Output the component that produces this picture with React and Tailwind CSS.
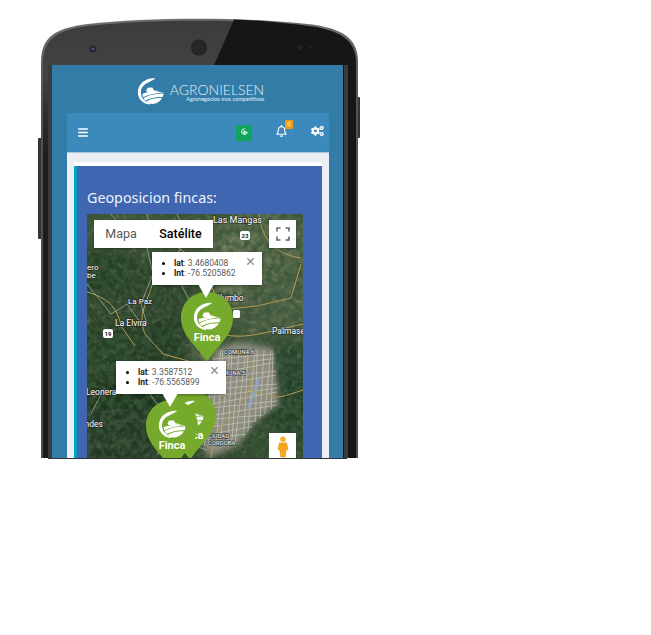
import React from 'react';
import { FaBars, FaRegBell, FaCogs } from 'react-icons/fa';

// map patches: x, y, rx, ry, colour (coords relative to the map box)
const PATCHES = [
  [40, 20, 60, 30, '#435539'], [120, 20, 30, 25, '#4b5d41'], [175, 30, 50, 40, '#5a6a4b'],
  [200, 90, 45, 35, '#506245'], [150, 60, 25, 35, '#6a7759'], [20, 60, 40, 30, '#283f25'],
  [70, 70, 30, 25, '#2c4327'], [20, 140, 40, 40, '#273f25'], [80, 130, 35, 30, '#233b22'],
  [60, 190, 70, 30, '#1d351f'], [30, 225, 60, 30, '#203822'], [200, 150, 35, 25, '#27432a'],
  [205, 195, 30, 30, '#233f26'], [118, 120, 12, 45, '#6b7259'], [165, 105, 18, 30, '#4d5e42'],
  [160, 225, 30, 25, '#33492f'],
];

const ROADS = [
  'M60 0 C62 20 84 28 100 40 L118 60 L136 96',
  'M132 118 C150 128 180 118 216 110',
  'M172 0 C176 30 190 40 214 44',
  'M214 50 L204 84 L170 92 L132 96',
  'M66 68 C60 90 50 100 58 120 L76 140 L112 150 L128 180',
  'M0 78 C20 84 30 92 34 112 L48 132',
  'M160 140 C168 160 166 180 144 200 C130 214 126 230 124 244',
  'M160 176 C190 180 176 190 216 176',
];

const BORDERS = [
  'M24 0 C40 20 46 30 60 34 L66 60 L54 90 L60 110',
  'M0 70 L24 100 L40 90 L56 112',
  'M90 0 L100 24 L84 50 L104 90 L120 100',
  'M60 150 L40 180 L16 176 L4 200',
  'M84 172 L60 176 L70 190 L100 200 L130 210',
  'M70 240 L96 228 L120 236',
];

const LABELS = [
  ['Las Mangas', 126, 9, 9],
  ['La Paz', 41, 90, 8],
  ['La Elvira', 28, 112, 8.5],
  ['Palmase', 185, 120, 8.5],
  ['Yumbo', 130, 87, 8.5],
  ['COMUNA 6', 137, 140, 6],
  ['COMUNA 5', 128, 161, 6],
  ['Leonera', -1, 181, 8.5],
  ['Los Andes', -24, 213, 8.5],
  ['CIUDAD', 121, 224, 6],
  ['CORDOBA', 121, 231, 6],
  ['ero', 0, 56, 8],
  ['be', 0, 64, 8],
];

function LogoMark({ className }) {
  return (
    <svg viewBox="0 0 28 28" className={className} fill="currentColor">
      <path d="M19 1 C11 0 2 5 1 14 C0 21 5 27 13 28 L14 26.6 C8 25.5 3.6 21 4 14.5 C4.4 8 11 3.4 19 1z" />
      <path d="M4.5 7.5 L7 5 L11 3 L15 1.8 L19.5 1 L15 3.4 L11 5.4 L7.5 7.4 L5.4 10z" />
      <path d="M9.5 13.5 L11 10.6 L16 10.4 L17.4 13.2 L24 14.6 L11 15.6z" />
      <path d="M5.5 17 C12 14.6 20 14.4 28 15.6 C20 15.8 12 17.6 6.2 20.4z" />
      <path d="M6.6 21.4 C13 17.6 20 16.6 27.6 16.6 C27.4 18 27 19.2 26.6 20.2 C20 19.8 14 21 8.6 24z" />
      <path d="M9.8 24.8 C15 22 20 21 25.8 21.4 C24 24.6 20.4 27 16 27.6 C13.6 27.2 11.4 26.2 9.8 24.8z" />
    </svg>
  );
}

function Pin({ className }) {
  return (
    <div className={`absolute w-[52px] h-[70px] ${className}`}>
      <svg viewBox="0 0 52 70" className="absolute inset-0 w-full h-full">
        <path d="M26 0 C41 0 52 11 52 26 C52 44 35 55 26 70 C17 55 0 44 0 26 C0 11 11 0 26 0z" fill="#76aa2c" />
      </svg>
      <div className="relative flex flex-col items-center pt-[10px]">
        <LogoMark className="w-[28px] h-[28px] text-white" />
        <span className="font-['Roboto',sans-serif] font-bold text-[11px] leading-[12px] mt-[2px] text-white">Finca</span>
      </div>
    </div>
  );
}

function InfoWindow({ className, lat, lng }) {
  return (
    <div className={`absolute w-[110px] h-[33px] bg-white shadow-[0_1px_3px_rgba(0,0,0,0.4)] ${className}`}>
      <ul className="font-['Roboto',sans-serif] text-[8.5px] leading-[10px] text-[#5a5a5a] pl-[22px] pt-[6px] list-disc marker:text-black">
        <li><b className="text-[#222]">lat</b>: {lat}</li>
        <li><b className="text-[#222]">lnt</b>: {lng}</li>
      </ul>
      <span className="absolute right-[7px] top-[3px] text-[16px] leading-[14px] text-[#8a8a8a] font-['Liberation_Sans',sans-serif]">×</span>
      <div className="absolute left-[46px] top-[32px] w-0 h-0 border-x-[8px] border-x-transparent border-t-[14px] border-t-white" />
    </div>
  );
}

function MapArt() {
  const streets = [];
  for (let i = 0; i < 14; i++) {
    // uneven spacing, a city grid is never straight
    const wob = ((i * 7) % 5) - 2;
    streets.push(<line key={'a' + i} x1={122 + i * 5 + wob} y1={136} x2={112 + i * 5.4 - wob} y2={232} />);
    streets.push(<line key={'b' + i} x1={114} y1={148 + i * 6 + wob} x2={190} y2={138 + i * 6 - wob} />);
  }
  return (
    <svg viewBox="0 0 216 244" className="absolute inset-0 w-full h-full">
      <defs>
        <filter id="soft" x="-30%" y="-30%" width="160%" height="160%">
          <feGaussianBlur stdDeviation="7" />
        </filter>
        <filter id="soft2" x="-30%" y="-30%" width="160%" height="160%">
          <feGaussianBlur stdDeviation="3" />
        </filter>
        <filter id="grain" x="0" y="0" width="100%" height="100%">
          <feTurbulence type="fractalNoise" baseFrequency="0.14" numOctaves="3" seed="7" />
          <feColorMatrix type="matrix" values="0 0 0 0 0.04  0 0 0 0 0.09  0 0 0 0 0.04  2.4 0 0 0 -0.85" />
        </filter>
        <filter id="grainLight" x="0" y="0" width="100%" height="100%">
          <feTurbulence type="fractalNoise" baseFrequency="0.2" numOctaves="2" seed="21" />
          <feColorMatrix type="matrix" values="0 0 0 0 0.55  0 0 0 0 0.62  0 0 0 0 0.45  2.2 0 0 0 -1.05" />
        </filter>
        <clipPath id="city">
          <path d="M128 136 L150 128 L186 134 L192 190 L170 206 L150 232 L120 244 L112 214z" />
        </clipPath>
      </defs>
      <rect width="216" height="244" fill="#31462c" />
      <g filter="url(#soft)">
        {PATCHES.map(([x, y, rx, ry, c], i) => (
          <ellipse key={i} cx={x} cy={y} rx={rx} ry={ry} fill={c} />
        ))}
      </g>
      <rect width="216" height="244" filter="url(#grainLight)" opacity="0.3" />
      <rect width="216" height="244" filter="url(#grain)" opacity="0.9" />
      <path d="M128 136 L150 128 L186 134 L192 190 L170 206 L150 232 L120 244 L112 214z" fill="#8e8d80" filter="url(#soft2)" />
      <g stroke="#dedbd0" strokeWidth="0.9" opacity="0.6" clipPath="url(#city)">{streets}</g>
      <path d="M172 164 L162 194" stroke="#8fa9c8" strokeWidth="3" opacity="0.8" />
      <g fill="none" stroke="#b39a55" strokeWidth="1">
        {ROADS.map((d, i) => <path key={i} d={d} />)}
      </g>
      <g fill="none" stroke="#c9d2c4" strokeWidth="0.7" opacity="0.8">
        {BORDERS.map((d, i) => <path key={i} d={d} />)}
      </g>
      <g fontFamily="Roboto, sans-serif" fill="#fff" stroke="#222" strokeWidth="1.6" style={{ paintOrder: 'stroke' }}>
        {LABELS.map(([t, x, y, s]) => (
          <text key={t} x={x} y={y} fontSize={s} strokeOpacity="0.7">{t}</text>
        ))}
      </g>
      <rect x="153" y="17" width="10" height="9" rx="2" fill="#fff" />
      <text x="158" y="24" fontSize="6" textAnchor="middle" fontFamily="Roboto, sans-serif" fontWeight="700" fill="#222">23</text>
      <rect x="16" y="115" width="10" height="9" rx="2" fill="#fff" />
      <text x="21" y="122" fontSize="6" textAnchor="middle" fontFamily="Roboto, sans-serif" fontWeight="700" fill="#222">19</text>
      <rect x="146" y="96" width="7" height="8" rx="1.5" fill="#fff" />
    </svg>
  );
}

function PhoneBody() {
  return (
    <svg viewBox="0 0 323 441" className="absolute left-[-3px] top-0 w-[323px] h-[441px]">
      <defs>
        <linearGradient id="rim" x1="0" y1="0" x2="0" y2="1">
          <stop offset="0" stopColor="#6e6e6e" />
          <stop offset="0.2" stopColor="#525252" />
          <stop offset="1" stopColor="#4d4d4d" />
        </linearGradient>
        <linearGradient id="sheen" x1="0" y1="0" x2="0" y2="1">
          <stop offset="0" stopColor="#3c3c3c" />
          <stop offset="0.12" stopColor="#434343" />
          <stop offset="0.3" stopColor="#1e1e1e" />
          <stop offset="1" stopColor="#181818" />
        </linearGradient>
        <pattern id="mesh" width="1.6" height="1.6" patternUnits="userSpaceOnUse">
          <circle cx="0.8" cy="0.8" r="0.45" fill="#4a4a4a" />
        </pattern>
      </defs>
      <rect x="0" y="120" width="4" height="101" rx="1" fill="#333" />
      <rect x="318" y="79" width="4" height="41" rx="1" fill="#333" />
      <path d="M3 440 V44 C3 20 16 10 50 6 C110 -1 210 -1 270 6 C304 10 320 20 320 44 V440z" fill="url(#rim)" />
      <path d="M5 440 V45 C5 22 18 12 50 8 C110 1 210 1 270 8 C302 12 318 22 318 45 V440z" fill="url(#sheen)" />
      <path d="M196 1.5 C230 3 255 6 270 8 C302 12 318 22 318 45 V440 H176 V47z" fill="#161616" />
      <rect x="10" y="47" width="4" height="393" fill="#3a3a3a" />
      <rect x="306" y="47" width="4" height="393" fill="#3a3a3a" />
      <circle cx="55" cy="31" r="3.4" fill="#24242c" />
      <circle cx="55" cy="31" r="1.4" fill="#55557a" />
      <circle cx="161" cy="29.5" r="8" fill="#1c1c1c" stroke="#333" strokeWidth="0.6" />
      <circle cx="161" cy="29.5" r="7" fill="url(#mesh)" />
      <circle cx="262" cy="29.5" r="2.6" fill="#222" />
      <circle cx="273" cy="29.5" r="1.6" fill="#222" />
    </svg>
  );
}

export default function App() {
  return (
    <div className="w-[651px] h-[635px] bg-white pt-[18px] pl-[41px] font-['Noto_Sans',sans-serif]">
      <div className="relative w-[317px] h-[441px]">
        <PhoneBody />
        {/* screen */}
        <div className="absolute left-[11px] top-[47px] w-[291px] h-[393px] bg-[#337ca8] overflow-hidden flex flex-col">
          <div className="h-[48px] shrink-0 flex justify-center pl-[6px] text-[#e6eff6]">
            <div className="flex items-start pt-[12px] gap-[6px]">
              <LogoMark className="w-[27px] h-[28px] text-white" />
              <div className="pt-[7px] flex flex-col items-end">
                <span className="font-['Lato',sans-serif] font-light text-[14px] leading-[12px]">AGRONIELSEN</span>
                <span className="font-['Lato',sans-serif] text-[5.6px] leading-[6px]">Agronegocios mas competitivos</span>
              </div>
            </div>
          </div>

          <div className="mx-[15px] w-[262px] flex-1 flex flex-col">
            <div className="h-[39px] shrink-0 bg-[#3b8abb] text-white relative flex items-center">
              <FaBars className="ml-[11px] w-[10px] h-[11px]" />
              <div className="ml-[148px] w-[16px] h-[16px] bg-[#0ea55d] flex justify-center pt-[3px]">
                <LogoMark className="w-[7px] h-[7px] text-white" />
              </div>
              <div className="relative ml-[24px]">
                <FaRegBell className="w-[11px] h-[12px] -mt-[3px]" />
                <span className="absolute left-[9px] top-[-8px] w-[8px] h-[9px] rounded-[1px] bg-[#f39c12] text-[6px] leading-[9px] text-center">0</span>
              </div>
              <FaCogs className="ml-[24px] w-[13px] h-[12px] -mt-[4px]" />
            </div>

            <div className="flex-1 bg-[#ebeff4] border-t border-[#a9c6dc] px-[7px] pt-[9px]">
              <div className="h-[400px] bg-white pt-[4px]">
                <div className="h-full bg-[#4066b2] border-l-[3px] border-[#00a5bd] pl-[10px] pt-[20px]">
                  <h3 className="text-[14.3px] font-normal leading-[24px] text-[#eef2fa] font-['Noto_Sans',sans-serif] h-[24px]">Geoposicion fincas:</h3>
                  <div className="relative mt-[4px] w-[216px] h-[244px] overflow-hidden">
                    <MapArt />

                    <Pin className="left-[94px] top-[78px]" />
                    <Pin className="left-[77px] top-[176px]" />
                    <Pin className="left-[59px] top-[186px]" />
                    <InfoWindow className="left-[65px] top-[38px]" lat="3.4680408" lng="-76.5205862" />
                    <InfoWindow className="left-[29px] top-[147px]" lat="3.3587512" lng="-76.5565899" />

                    {/* map type + fullscreen + pegman */}
                    <div className="absolute left-[7px] top-[6px] h-[28px] flex bg-white shadow-[0_1px_2px_rgba(0,0,0,0.3)] font-['Roboto',sans-serif] text-[12.5px] leading-[28px]">
                      <span className="w-[54px] text-center text-[#565656]">Mapa</span>
                      <span className="w-[65px] text-center text-black font-medium">Satélite</span>
                    </div>
                    <div className="absolute left-[182px] top-[6px] w-[27px] h-[28px] bg-white flex items-center justify-center shadow-[0_1px_2px_rgba(0,0,0,0.3)]">
                      <svg viewBox="0 0 14 14" className="w-[14px] h-[14px]" fill="none" stroke="#666" strokeWidth="1.6">
                        <path d="M1 4.5V1H4.5M9.5 1H13V4.5M13 9.5V13H9.5M4.5 13H1V9.5" />
                      </svg>
                    </div>
                    <div className="absolute left-[182px] top-[219px] w-[27px] h-[28px] bg-white flex items-start justify-center pt-[3px]">
                      <svg viewBox="0 0 12 24" className="w-[12px] h-[22px]">
                        <circle cx="6" cy="3.5" r="3" fill="#f6b21b" />
                        <path d="M2 7.5 H10 L11.5 15 H9.5 L8.5 23 H3.5 L2.5 15 H0.5z" fill="#f6a81b" stroke="#c9861a" strokeWidth="0.5" />
                      </svg>
                    </div>
                  </div>
                </div>
              </div>
            </div>
          </div>
        </div>
        {/* dark edge where the frame is cut off */}
        <div className="absolute left-[7px] top-[440px] w-[299px] h-[1px] bg-[#333]" />
      </div>
    </div>
  );
}
